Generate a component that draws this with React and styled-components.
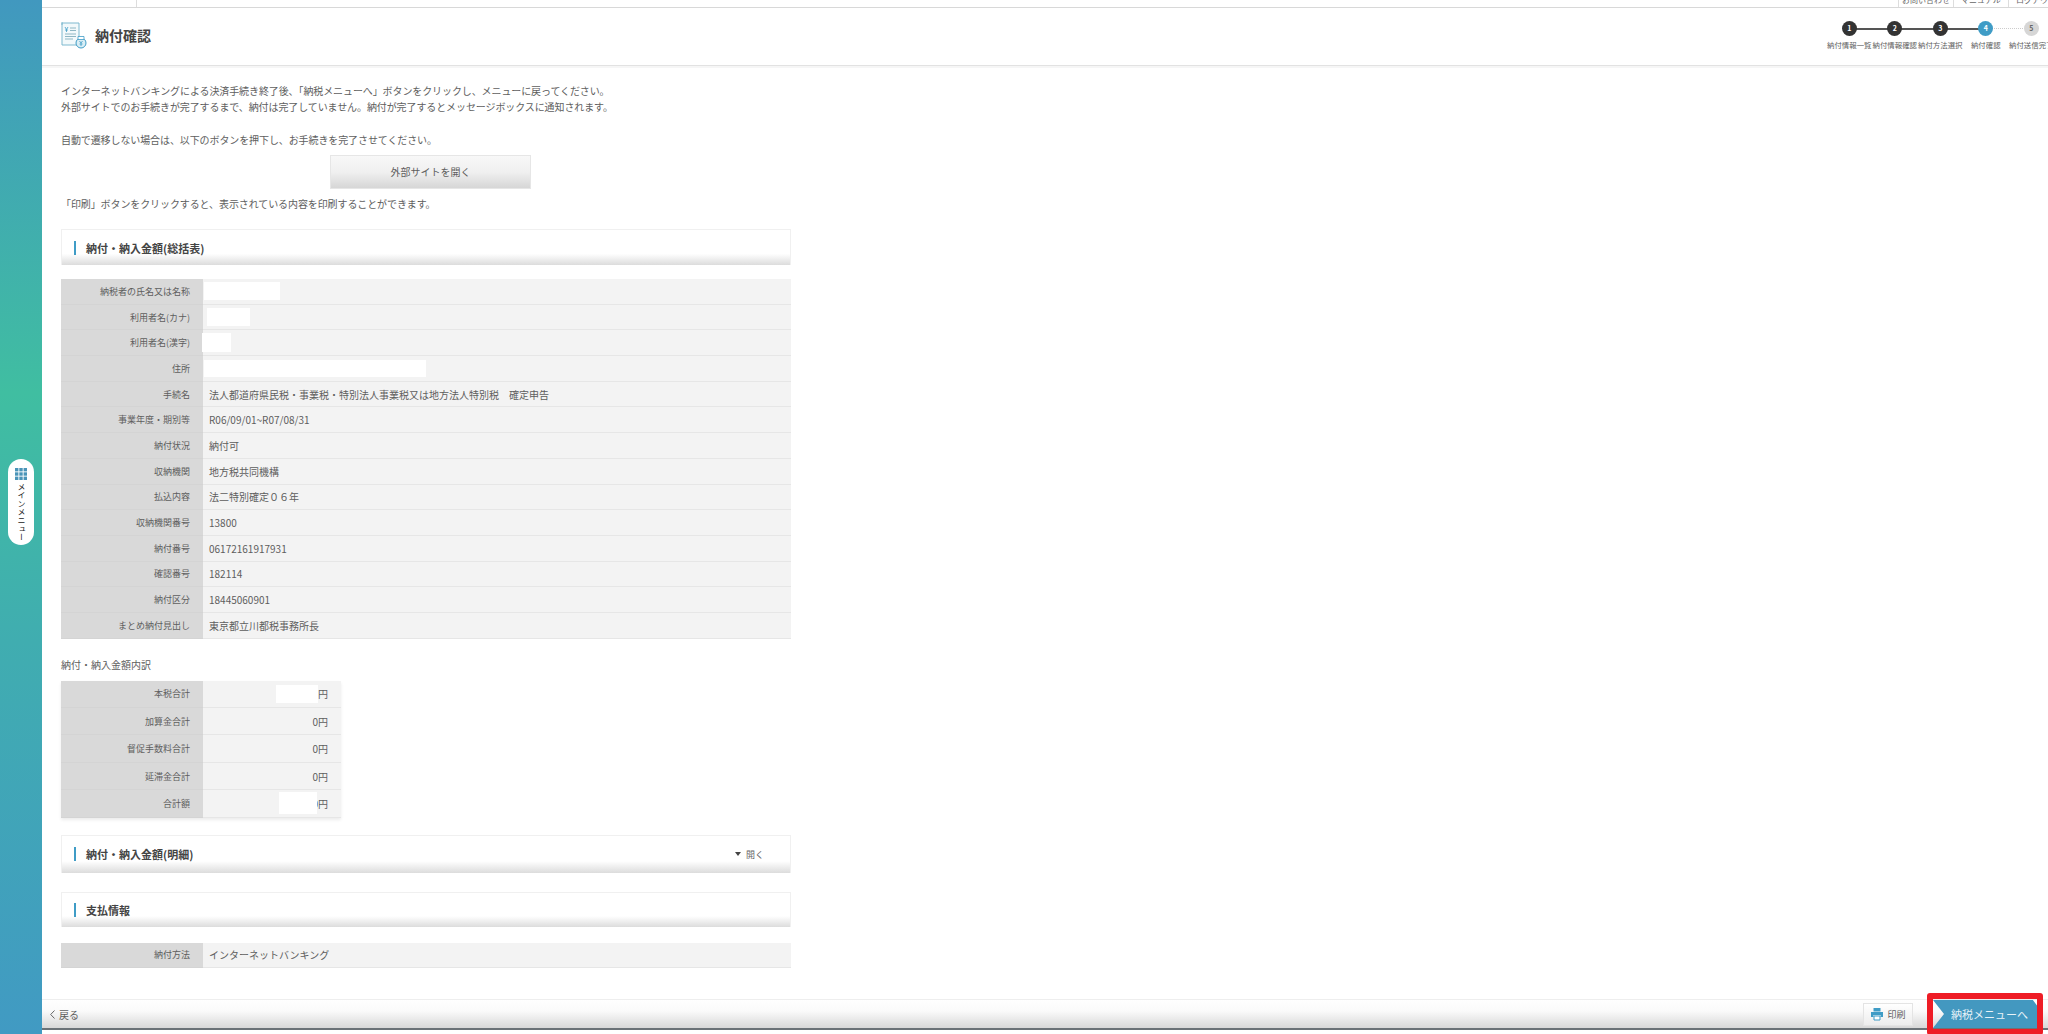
import React from 'react';
import styled, { createGlobalStyle } from 'styled-components';

const GlobalStyle = createGlobalStyle`
  html, body {
    margin: 0;
    padding: 0;
    height: 100%;
    overflow: hidden;
    background: #e9f1f3;
    color: #5e5e5e;
    font-family: "Noto Sans CJK JP", "Noto Sans", sans-serif;
    font-size: 10px;
  }
  * { box-sizing: border-box; }
`;

const Page = styled.div`
  display: flex;
  width: 2048px;
  height: 1034px;
  overflow: hidden;
`;

const Sidebar = styled.aside`
  flex: 0 0 42px;
  display: flex;
  align-items: center;
  justify-content: flex-start;
  padding: 0 0 30px 8px;
  background: linear-gradient(180deg, #4198bf 0%, #40bea1 38%, #40adb0 62%, #419ac3 100%);
`;

const MenuPill = styled.div`
  width: 26px;
  height: 86px;
  border-radius: 13px;
  background: #fff;
  display: flex;
  flex-direction: column;
  align-items: center;
  padding-top: 9px;
  gap: 3px;
`;

const MenuLabel = styled.span`
  writing-mode: vertical-rl;
  font-size: 8px;
  line-height: 1;
  letter-spacing: 0.3px;
  color: #222;
`;

const Main = styled.div`
  flex: 1;
  min-width: 0;
  display: flex;
  flex-direction: column;
  background: #fff;
`;

const TopBar = styled.div`
  flex: 0 0 8px;
  display: flex;
  justify-content: space-between;
  border-bottom: 1px solid #d8d8d8;
  overflow: hidden;
`;

const TopLeft = styled.div`
  width: 95px;
  border-right: 1px solid #ddd;
`;

const TopTabs = styled.div`
  display: flex;
  margin-right: -15px;
`;

const TopTab = styled.div`
  width: 55px;
  height: 7px;
  display: flex;
  align-items: flex-end;
  justify-content: center;
  overflow: hidden;
  border-left: 1px solid #ddd;
  font-size: 8px;
  line-height: 12px;
  color: #666;
  padding-bottom: 1px;
`;

const Header = styled.header`
  flex: 0 0 58px;
  display: flex;
  align-items: center;
  justify-content: space-between;
  padding: 0 0 3px 19px;
  border-bottom: 1px solid #e2e2e2;
  box-shadow: 0 2px 0 #f6f6f6;
`;

const TitleGroup = styled.div`
  display: flex;
  align-items: center;
  gap: 8px;
`;

const Title = styled.h1`
  margin: 0;
  font-size: 14px;
  font-weight: 700;
  line-height: 1;
  color: #444;
`;

const Steps = styled.ol`
  display: flex;
  list-style: none;
  margin: 0 -6px 0 0;
  padding: 0;
`;

const Step = styled.li`
  position: relative;
  width: 45.5px;
  display: flex;
  flex-direction: column;
  align-items: center;
  gap: 4px;
  &:not(:first-child)::before {
    content: '';
    position: absolute;
    top: 7px;
    left: -50%;
    width: 100%;
    border-top: ${p => (p.$state === 'todo' ? '1px dotted #ccc' : '2px solid #555')};
  }
`;

const StepDot = styled.span`
  position: relative;
  z-index: 1;
  width: 15px;
  height: 15px;
  border-radius: 50%;
  display: flex;
  align-items: center;
  justify-content: center;
  font-size: 7px;
  font-weight: 700;
  line-height: 1;
  color: ${p => (p.$state === 'todo' ? '#666' : '#fff')};
  background: ${p => (p.$state === 'done' ? '#333' : p.$state === 'now' ? '#3f9cc6' : '#d6d6d6')};
`;

const StepLabel = styled.span`
  font-size: 7.4px;
  line-height: 9px;
  white-space: nowrap;
  color: #5e5e5e;
`;

const Content = styled.main`
  flex: 1;
  min-height: 0;
  padding: 17px 0 0 19px;
`;

const Inner = styled.div`
  width: 730px;
`;

const Paragraph = styled.p`
  margin: ${p => p.$mt || 0}px 0 0;
  font-size: 10px;
  line-height: 16.4px;
  letter-spacing: -0.1px;
  white-space: nowrap;
`;

const OpenButton = styled.button`
  display: block;
  width: 201px;
  height: 34px;
  margin: 6px 0 0 269px;
  padding: 0;
  font: inherit;
  font-size: 10px;
  color: #5e5e5e;
  border: 1px solid #e6e6e6;
  background: linear-gradient(180deg, #f8f8f8 0%, #f0f0f0 50%, #d6d6d6 100%);
`;

const SectionHead = styled.div`
  display: flex;
  align-items: center;
  justify-content: space-between;
  height: ${p => p.$h}px;
  margin-top: ${p => p.$mt}px;
  padding: 0 26px 0 12px;
  border: 1px solid #f0f0f0;
  border-bottom: 0;
  background: linear-gradient(180deg, #fff 0%, #fff 68%, #dcdcdc 100%);
`;

const SectionTitle = styled.h2`
  margin: 0;
  padding-left: 10px;
  border-left: 2px solid #3f9cc6;
  font-size: 11px;
  font-weight: 700;
  line-height: 14px;
  color: #444;
`;

const Toggle = styled.span`
  display: flex;
  align-items: center;
  gap: 5px;
  font-size: 9px;
  color: #666;
  &::before {
    content: '';
    border-left: 3px solid transparent;
    border-right: 3px solid transparent;
    border-top: 4px solid #444;
  }
`;

const InfoTable = styled.div`
  width: ${p => p.$w || 730}px;
  margin-top: ${p => p.$mt}px;
  ${p => p.$shadow && 'box-shadow: 0 2px 3px rgba(0, 0, 0, 0.08);'}
`;

const Row = styled.div`
  display: grid;
  grid-template-columns: 142px 1fr;
  height: ${p => p.$h || 25.7}px;
`;

const Label = styled.div`
  display: flex;
  align-items: center;
  justify-content: flex-end;
  padding-right: 13px;
  font-size: 9px;
  background: #d9d9d9;
  border-bottom: 1px solid #d4d4d4;
`;

const Value = styled.div`
  display: flex;
  align-items: center;
  justify-content: ${p => (p.$right ? 'flex-end' : 'flex-start')};
  padding: ${p => (p.$right ? '0 13px 0 0' : '0 0 0 6px')};
  font-size: 10px;
  white-space: pre;
  background: #f3f3f3;
  border-bottom: 1px solid #e6e6e6;
`;

const Masked = styled.span`
  display: block;
  width: ${p => p.$w}px;
  height: ${p => p.$h}px;
  margin-left: ${p => p.$ml || 0}px;
  background: #fff;
`;

// the digit in front of 円 is half hidden by the mask in the total row
const AmountTail = styled.span`
  display: inline-block;
  width: 11px;
  overflow: hidden;
  direction: rtl;
`;

const SubHeading = styled.div`
  margin-top: 18px;
  font-size: 10px;
  line-height: 16px;
`;

const Footer = styled.footer`
  flex: 0 0 31px;
  margin-bottom: 4px;
  display: flex;
  align-items: center;
  justify-content: space-between;
  padding: 0 11px 0 8px;
  border-top: 1px solid #eee;
  border-bottom: 2px solid #6b7277;
  background: linear-gradient(180deg, #fff 0%, #fafafa 40%, #d8d8d8 100%);
`;

const BackLink = styled.a`
  display: flex;
  align-items: center;
  gap: 4px;
  font-size: 10px;
  color: #5e5e5e;
`;

const FooterActions = styled.div`
  display: flex;
  align-items: center;
  gap: 20px;
`;

const PrintButton = styled.button`
  display: flex;
  align-items: center;
  justify-content: center;
  gap: 3px;
  width: 50px;
  height: 23px;
  padding: 0;
  font: inherit;
  font-size: 9px;
  color: #5e5e5e;
  border: 1px solid #e4e4e4;
  background: linear-gradient(180deg, #fff 0%, #ededed 100%);
`;

const Highlight = styled.div`
  position: relative;
  &::after {
    content: '';
    position: absolute;
    inset: -7px -6px -7px -6px;
    border: 6px solid #ee1c25;
    border-radius: 3px;
    pointer-events: none;
  }
`;

const NextButton = styled.button`
  display: block;
  width: 104px;
  height: 28px;
  padding: 0 0 0 18px;
  border: 0;
  font: inherit;
  font-size: 11px;
  text-align: left;
  color: #e8f3f8;
  background: #4398c0;
  clip-path: polygon(0 0, 96% 0, 100% 20%, 100% 100%, 0 100%, 11px 50%);
`;

const DocIcon = () => (
  <svg width="26" height="28" viewBox="0 0 26 28" fill="none">
    <path d="M1 2h17v22H1z" fill="#f2f9fb" stroke="#7fb9cf" />
    <path d="M1 1v3" stroke="#7fb9cf" />
    <path d="M4 6l1.5 2.5L7 6M5.5 8.5V11M4 9h3" stroke="#3f9cc6" strokeWidth="0.8" />
    <path d="M9 7h6M9 9.5h6M4 13h11M4 15.5h11M4 18h8" stroke="#8fb7c4" />
    <circle cx="20" cy="22" r="5" fill="#d9eef5" stroke="#3f9cc6" />
    <path d="M17 15.5h6v3h-6z" fill="#fff" stroke="#3f9cc6" strokeWidth="0.8" />
    <path d="M18.5 20l1.5 2 1.5-2M20 22v3M18.5 23h3" stroke="#3f9cc6" strokeWidth="0.8" />
  </svg>
);

const GridIcon = () => (
  <svg width="12" height="12" viewBox="0 0 12 12" fill="#4a94b8">
    {[0, 4.3, 8.6].map(y =>
      [0, 4.3, 8.6].map(x => <rect key={`${x}-${y}`} x={x} y={y} width="3.4" height="3.4" />)
    )}
  </svg>
);

const PrinterIcon = () => (
  <svg width="14" height="14" viewBox="0 0 14 14">
    <path d="M3.5 1h7v3.5h-7z" fill="#3f9cc6" />
    <path d="M1 5h12v5h-2.5V8h-7v2H1z" fill="#3f9cc6" />
    <path d="M4 9h6v4H4z" fill="#fff" stroke="#3f9cc6" />
  </svg>
);

const BackChevron = () => (
  <svg width="5" height="9" viewBox="0 0 5 9" fill="none">
    <path d="M4.5 0.5L0.7 4.5l3.8 4" stroke="#666" />
  </svg>
);

const stepList = [
  { label: '納付情報一覧', state: 'done' },
  { label: '納付情報確認', state: 'done' },
  { label: '納付方法選択', state: 'done' },
  { label: '納付確認', state: 'now' },
  { label: '納付送信完了', state: 'todo' },
];

const summaryRows = [
  { label: '納税者の氏名又は名称', mask: { w: 76, h: 18, ml: -5 } },
  { label: '利用者名(カナ)', mask: { w: 43, h: 18, ml: -2 } },
  { label: '利用者名(漢字)', mask: { w: 29, h: 19, ml: -7 } },
  { label: '住所', mask: { w: 222, h: 17, ml: -5 } },
  { label: '手続名', value: '法人都道府県民税・事業税・特別法人事業税又は地方法人特別税　確定申告' },
  { label: '事業年度・期別等', value: 'R06/09/01~R07/08/31' },
  { label: '納付状況', value: '納付可' },
  { label: '収納機関', value: '地方税共同機構' },
  { label: '払込内容', value: '法二特別確定０６年' },
  { label: '収納機関番号', value: '13800' },
  { label: '納付番号', value: '06172161917931' },
  { label: '確認番号', value: '182114' },
  { label: '納付区分', value: '18445060901' },
  { label: 'まとめ納付見出し', value: '東京都立川都税事務所長' },
];

const amountRows = [
  { label: '本税合計', mask: { w: 42, h: 18 }, value: '円' },
  { label: '加算金合計', value: '0円' },
  { label: '督促手数料合計', value: '0円' },
  { label: '延滞金合計', value: '0円' },
  { label: '合計額', mask: { w: 38, h: 22 }, value: '0円', overlap: true },
];

export default function App() {
  return (
    <Page>
      <GlobalStyle />
      <Sidebar>
        <MenuPill>
          <GridIcon />
          <MenuLabel>メインメニュー</MenuLabel>
        </MenuPill>
      </Sidebar>
      <Main>
        <TopBar>
          <TopLeft />
          <TopTabs>
            <TopTab>お問い合わせ</TopTab>
            <TopTab>マニュアル</TopTab>
            <TopTab>ログアウト</TopTab>
          </TopTabs>
        </TopBar>
        <Header>
          <TitleGroup>
            <DocIcon />
            <Title>納付確認</Title>
          </TitleGroup>
          <Steps>
            {stepList.map((s, i) => (
              <Step key={s.label} $state={s.state}>
                <StepDot $state={s.state}>{i + 1}</StepDot>
                <StepLabel>{s.label}</StepLabel>
              </Step>
            ))}
          </Steps>
        </Header>
        <Content>
          <Inner>
            <Paragraph>インターネットバンキングによる決済手続き終了後、「納税メニューへ」ボタンをクリックし、メニューに戻ってください。</Paragraph>
            <Paragraph>外部サイトでのお手続きが完了するまで、納付は完了していません。納付が完了するとメッセージボックスに通知されます。</Paragraph>
            <Paragraph $mt={16.4}>自動で遷移しない場合は、以下のボタンを押下し、お手続きを完了させてください。</Paragraph>
            <OpenButton>外部サイトを開く</OpenButton>
            <Paragraph $mt={7}>「印刷」ボタンをクリックすると、表示されている内容を印刷することができます。</Paragraph>

            <SectionHead $h={36} $mt={17}>
              <SectionTitle>納付・納入金額(総括表)</SectionTitle>
            </SectionHead>
            <InfoTable $mt={14}>
              {summaryRows.map(r => (
                <Row key={r.label}>
                  <Label>{r.label}</Label>
                  <Value>
                    {r.mask ? <Masked $w={r.mask.w} $h={r.mask.h} $ml={r.mask.ml} /> : r.value}
                  </Value>
                </Row>
              ))}
            </InfoTable>

            <SubHeading>納付・納入金額内訳</SubHeading>
            <InfoTable $w={280} $mt={8} $shadow>
              {amountRows.map(r => (
                <Row key={r.label} $h={27.4}>
                  <Label>{r.label}</Label>
                  <Value $right>
                    {r.mask && <Masked $w={r.mask.w} $h={r.mask.h} />}
                    {r.overlap ? <AmountTail>{r.value}</AmountTail> : r.value}
                  </Value>
                </Row>
              ))}
            </InfoTable>

            <SectionHead $h={38} $mt={17}>
              <SectionTitle>納付・納入金額(明細)</SectionTitle>
              <Toggle>開く</Toggle>
            </SectionHead>
            <SectionHead $h={35} $mt={19}>
              <SectionTitle>支払情報</SectionTitle>
            </SectionHead>
            <InfoTable $mt={16}>
              <Row>
                <Label>納付方法</Label>
                <Value>インターネットバンキング</Value>
              </Row>
            </InfoTable>
          </Inner>
        </Content>
        <Footer>
          <BackLink>
            <BackChevron />
            戻る
          </BackLink>
          <FooterActions>
            <PrintButton>
              <PrinterIcon />
              印刷
            </PrintButton>
            <Highlight>
              <NextButton>納税メニューへ</NextButton>
            </Highlight>
          </FooterActions>
        </Footer>
      </Main>
    </Page>
  );
}
